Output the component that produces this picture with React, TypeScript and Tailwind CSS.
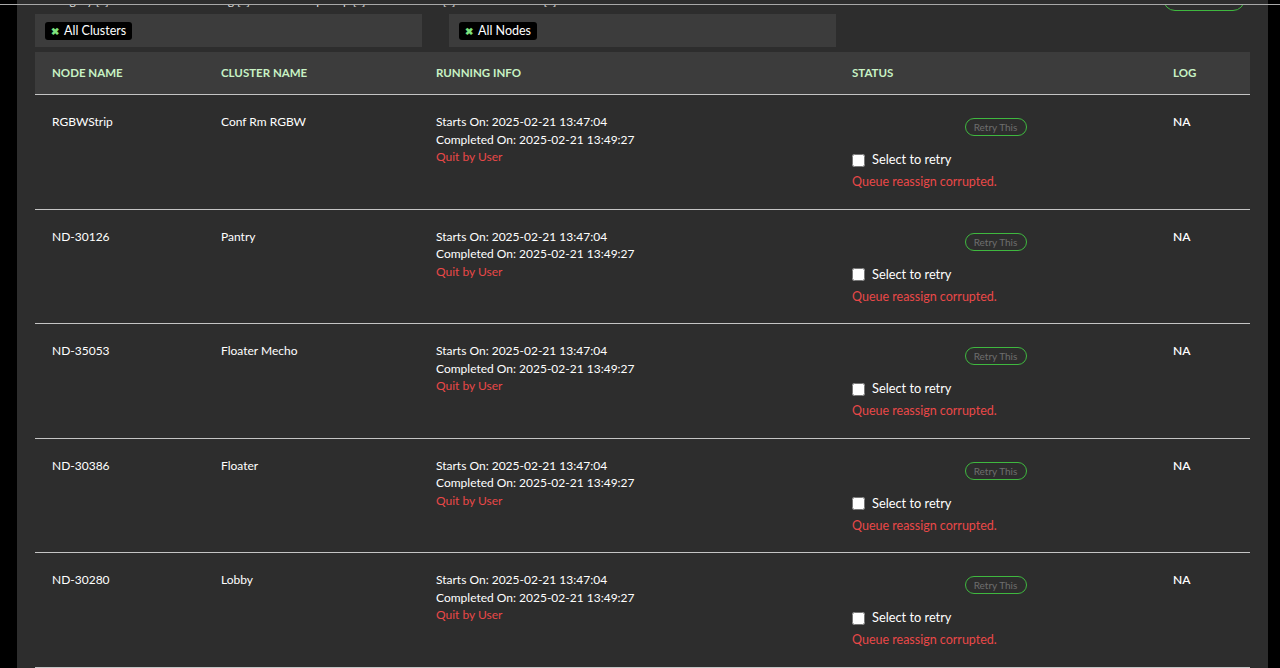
import React from 'react';

interface NodeRow {
  node: string;
  cluster: string;
}

const rows: NodeRow[] = [
  { node: 'RGBWStrip', cluster: 'Conf Rm RGBW' },
  { node: 'ND-30126', cluster: 'Pantry' },
  { node: 'ND-35053', cluster: 'Floater Mecho' },
  { node: 'ND-30386', cluster: 'Floater' },
  { node: 'ND-30280', cluster: 'Lobby' },
];

const cols = 'grid grid-cols-[169px_215px_416px_321px_94px]';

const Chip: React.FC<{ label: string }> = ({ label }) => (
  <div className="flex items-center h-[18px] px-[6px] gap-[5px] bg-black rounded-[3px] text-[12.5px] leading-none text-white">
    <span className="text-[#7ee27e] text-[10px] font-bold leading-none">✖</span>
    <span>{label}</span>
  </div>
);

const App: React.FC = () => {
  return (
    <div
      className="relative flex h-[668px] w-[1280px] overflow-hidden bg-black"
      style={{ fontFamily: 'Lato, "Liberation Sans", sans-serif' }}
    >
      {/* window edge over the scrolled page */}
      <div className="absolute left-0 right-0 top-0 z-10 flex h-[5px] border-b border-[#a8a8a8]">
        <div className="w-[17px] bg-black" />
        <div className="flex-1 bg-[#2d2d2d]" />
        <div className="w-[12px] bg-black" />
      </div>
      <div className="w-[17px] shrink-0" />
      <div className="flex-1 bg-[#2d2d2d] px-[18px] overflow-hidden">
        {/* scrolled-off toolbar */}
        <div className="flex h-[12px] items-start justify-between overflow-hidden">
          <div className="-mt-[7px] flex gap-[40px] pl-[10px] text-[12px] leading-[16px] text-[#dcdcdc]">
            <span>Category [x]</span>
            <span>Node Clustering [x]</span>
            <span>Group Map [x]</span>
            <span>Nodes [x]</span>
            <span>Selected [x]</span>
          </div>
          <div className="-mt-[13px] mr-[5px] flex h-[24px] w-[82px] shrink-0 items-center justify-center rounded-full border border-[#3fb83f] text-[10px] text-[#707070]">
            Retry All Failed
          </div>
        </div>

        {/* filters */}
        <div className="mt-[2px] flex gap-[27px]">
          <div className="flex h-[33px] w-[387px] items-start bg-[#3c3c3c] pl-[10px] pt-[8px]">
            <Chip label="All Clusters" />
          </div>
          <div className="flex h-[33px] w-[387px] items-start bg-[#3c3c3c] pl-[10px] pt-[8px]">
            <Chip label="All Nodes" />
          </div>
        </div>

        {/* table */}
        <div className="mt-[5px] w-[1215px]">
          <div className={`${cols} h-[43px] items-center bg-[#3c3c3c] border-b border-[#c4c4c4] text-[11.5px] font-bold text-[#c8f2c4]`}>
            <div className="pl-[17px]">NODE NAME</div>
            <div className="pl-[17px]">CLUSTER NAME</div>
            <div className="pl-[17px]">RUNNING INFO</div>
            <div className="pl-[17px]">STATUS</div>
            <div className="pl-[17px]">LOG</div>
          </div>
          {rows.map((r, i) => (
            <div key={i} className={`${cols} h-[114.5px] border-b border-[#c4c4c4] text-[12px] leading-[17.5px] text-white`}>
              <div className="pl-[17px] pt-[18px]">{r.node}</div>
              <div className="pl-[17px] pt-[18px]">{r.cluster}</div>
              <div className="pl-[17px] pt-[18px]">
                <div>Starts On: 2025-02-21 13:47:04</div>
                <div>Completed On: 2025-02-21 13:49:27</div>
                <div className="text-[#e94848]">Quit by User</div>
              </div>
              <div className="px-[17px] pt-[23px]">
                <div className="flex justify-center">
                  <div className="flex h-[18px] w-[62px] items-center justify-center rounded-full border border-[#3fb83f] text-[10px] leading-none text-[#6e6e6e]">
                    Retry This
                  </div>
                </div>
                <label className="mt-[14px] flex items-center h-[20px] text-[12.8px]">
                  <input type="checkbox" className="m-0 mr-[7px] h-[13px] w-[13px]" />
                  <span>Select to retry</span>
                </label>
                <div className="mt-[3px] text-[12.5px] leading-[18px] text-[#e94848]">Queue reassign corrupted.</div>
              </div>
              <div className="pl-[17px] pt-[18px] font-semibold">NA</div>
            </div>
          ))}
        </div>
      </div>
      <div className="w-[12px] shrink-0" />
    </div>
  );
};

export default App;
